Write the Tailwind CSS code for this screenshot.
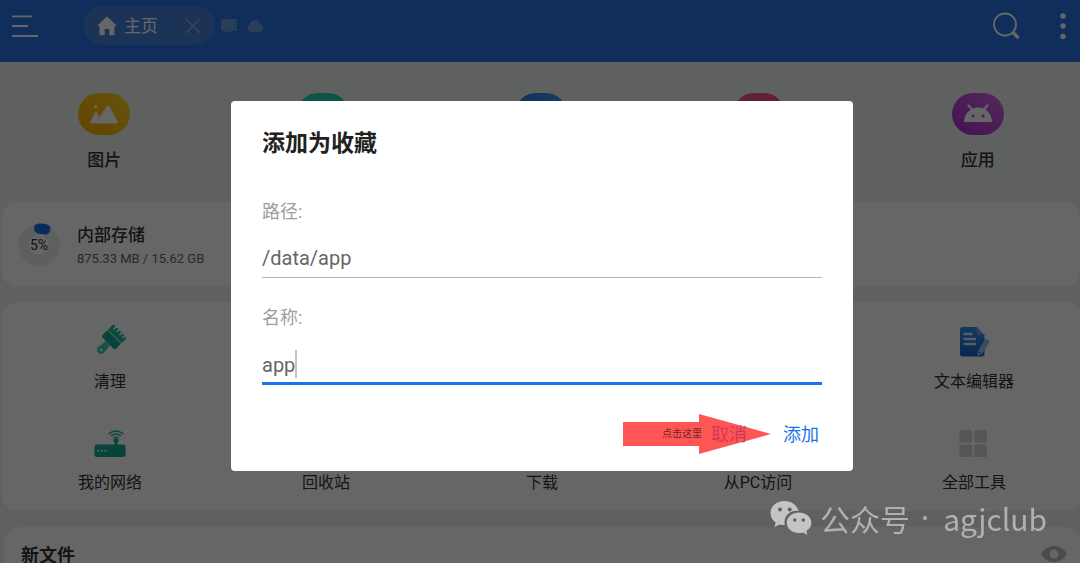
<!DOCTYPE html>
<html lang="zh-CN">
<head>
    <meta charset="UTF-8">
    <meta name="viewport" content="width=device-width, initial-scale=1.0">
    <title>添加为收藏</title>
    <script src="https://cdn.jsdelivr.net/npm/@tailwindcss/browser@4"></script>
</head>
<body class="flex h-screen flex-col overflow-hidden bg-[#ecf3f0] font-[Roboto,'Noto_Sans_CJK_SC',sans-serif] text-[#333]">

    <!-- Barra superior -->
    <header class="flex h-[62px] shrink-0 items-start bg-[#2673e6] pl-3 text-white">
        <button aria-label="菜单" class="mt-[14px]">
            <svg class="h-6 w-[26px]" viewBox="0 0 26 24" stroke="currentColor" stroke-width="1.800"><path d="M0 2.300h20M0 12h16M0 22h26"/></svg>
        </button>
        <div class="mt-[6px] ml-[45px] flex h-[39px] w-[132px] items-center rounded-full bg-[#4280d6] pr-[14px] pl-[14px]">
            <svg class="h-5 w-5" viewBox="0 0 20 20" fill="currentColor"><path d="M10 0.500 19 9a.8.800 0 0 1-.5 1.300H17.500V18.500a.7.700 0 0 1-.7.700H12.300V13H7.700v6.200H3.200a.7.700 0 0 1-.7-.7V10.300H1.500A.8.800 0 0 1 1 9z"/></svg>
            <a href="#" class="ml-[7px] text-[17px] leading-6">主页</a>
            <button aria-label="关闭" class="ml-auto">
                <svg class="h-4 w-4" viewBox="0 0 16 16" fill="none" stroke="#92b6e6" stroke-width="1.200"><path d="m1 1 14 14M15 1 1 15"/></svg>
            </button>
        </div>
        <svg class="mt-[19px] ml-[6px] h-[14px] w-4" viewBox="0 0 16 14" fill="#6a98de"><path d="M1.500 0h13A1.500 1.500 0 0 1 16 1.500v9a1.500 1.500 0 0 1-1.500 1.500H10l-1 1H7l-1-1-1 1H3l-1-1h-.5A1.500 1.500 0 0 1 0 10.500v-9A1.500 1.500 0 0 1 1.500 0z"/><path d="M14 2v1.500M14 5v1.500M14 8v1.500" stroke="#2673e6"/></svg>
        <svg class="mt-[19px] ml-[10px] h-[14px] w-4" viewBox="0 0 16 14" fill="#6a98de"><path d="M4 13a4 4 0 0 1-1.500-7.500C3 3 5 .8 8 .8s4.800 2 5.200 4.500A3.900 3.900 0 0 1 12 13z"/></svg>
        <button aria-label="搜索" class="mt-3 ml-auto">
            <svg class="h-7 w-7" viewBox="0 0 28 28" fill="none" stroke="currentColor"><circle cx="12" cy="12.500" r="11" stroke-width="1.800"/><path d="m19.500 20 6 6" stroke-width="3.400"/></svg>
        </button>
        <button aria-label="更多" class="mt-[13px] mr-[13px] ml-[38px]">
            <svg class="h-[27px] w-2" viewBox="0 0 8 27" fill="currentColor"><circle cx="4" cy="3" r="2.700"/><circle cx="4" cy="13" r="2.700"/><circle cx="4" cy="23.500" r="2.700"/></svg>
        </button>
    </header>

    <!-- Categorías -->
    <nav class="-mr-[7px] -ml-[5px] grid shrink-0 grid-cols-5 pt-[31px] pb-[30px] text-center text-[17px] leading-6 font-medium">
        <a href="#" class="flex flex-col items-center gap-[13px]">
            <span class="flex h-[42px] w-[52px] items-center justify-center rounded-full bg-linear-to-tr from-[#f5a800] to-[#ffd21f]">
                <svg class="h-5 w-7" viewBox="0 0 28 20" fill="#fff"><circle cx="5.500" cy="2.500" r="1.700"/><path d="M1.500 19.500a1.200 1.200 0 0 1-1-1.800L5 8.500q1-1.800 2 0l2.500 5L16.500 2.500q1.500-2.200 3 0l8 15a1.300 1.300 0 0 1-1 2z"/></svg>
            </span>
            图片
        </a>
        <a href="#" aria-label="音乐" class="flex flex-col items-center"><span class="h-[42px] w-[52px] rounded-full bg-[#1fd0b4]"></span></a>
        <a href="#" aria-label="视频" class="flex flex-col items-center"><span class="h-[42px] w-[52px] rounded-full bg-linear-to-r from-[#2478e8] to-[#3c9ef0]"></span></a>
        <a href="#" aria-label="文档" class="flex flex-col items-center"><span class="h-[42px] w-[52px] rounded-full bg-[#f0547c]"></span></a>
        <a href="#" class="flex flex-col items-center gap-[13px]">
            <span class="flex h-[42px] w-[52px] items-center justify-center rounded-full bg-linear-to-tr from-[#a826c8] to-[#d268e0]">
                <svg class="h-5 w-7" viewBox="0 0 28 20"><path d="M0 18A14 14.500 0 0 1 28 18z" fill="#fff"/><path d="m4.500 1.500 4.500 5M23.500 1.500 19 6.500" stroke="#fff" stroke-width="2.200" stroke-linecap="round"/><circle cx="9" cy="12" r="1.500" fill="#bb48d2"/><circle cx="19" cy="12" r="1.500" fill="#bb48d2"/></svg>
            </span>
            应用
        </a>
    </nav>

    <!-- Almacenamiento -->
    <section class="ml-[2px] flex h-[85px] shrink-0 items-center rounded-2xl bg-white pl-4">
        <div class="relative flex h-[42px] w-[42px] items-center justify-center rounded-full bg-[#e8efec] text-sm">
            <svg class="absolute top-0 left-0 h-[42px] w-[42px] overflow-visible" viewBox="0 0 42 42"><circle cx="21" cy="21" r="10" fill="#fff"/><path d="M21.500-.500q8-.5 10.500 3 1 4-1.500 7-2 1.500-6 .5-5 .5-7.500-2.500-2-3.500 0-6.500 1.500-1.500 4.500-1.500z" fill="#1a6be8"/></svg>
            <span class="relative">5%</span>
        </div>
        <div class="mt-1 ml-[17px]">
            <h2 class="text-[17px] leading-6 font-medium">内部存储</h2>
            <p class="text-[13px] leading-6 text-[#666]">875.33 MB / 15.62 GB</p>
        </div>
    </section>

    <!-- Herramientas -->
    <section class="mt-[15px] -mr-[2px] ml-[2px] grid shrink-0 grid-cols-5 gap-y-[34px] rounded-2xl bg-white pt-[23px] pb-[18px] text-base leading-5">
        <a href="#" class="flex flex-col items-center gap-[15px]">
            <svg class="h-8 w-8" viewBox="0 0 32 32"><g transform="rotate(45 16 16)"><path d="M6.500 3q0-1.500 1.500-1.500T9.500 3v1.500a.8.800 0 0 0 1.600 0V3q0-1.500 1.300-1.500T13.700 3v1.500a.8.800 0 0 0 1.600 0V3q0-1.500 1.300-1.500T17.900 3v1.500a.8.800 0 0 0 1.600 0V3q0-1.500 1.300-1.500T22.100 3v1.500a.8.800 0 0 0 1.600 0V3q0-1.500 1-1.500T25.700 3v6.500H6.500z" fill="#18b89f"/><path d="M6.500 10.300h19.200V17a2 2 0 0 1-2 2H8.500a2 2 0 0 1-2-2z" fill="#0fa891"/><path d="M13 19h6l1 9.500a4 4 0 0 1-8 0z" fill="#3fcbb6"/><circle cx="16" cy="28.500" r="1.300" fill="#fff"/></g></svg>
            清理
        </a>
        <a href="#" aria-label="分析"></a>
        <a href="#" aria-label="加密"></a>
        <a href="#" aria-label="云盘"></a>
        <a href="#" class="flex flex-col items-center gap-[15px]">
            <svg class="h-8 w-8" viewBox="0 0 32 32">
                <defs><linearGradient id="doc" x1="0" y1="0" x2="0" y2="1"><stop stop-color="#2d93e6"/><stop offset="1" stop-color="#1b5fd2"/></linearGradient></defs>
                <path d="M5 2h13.500l8 8V29a2.500 2.500 0 0 1-2.500 2.500h-19.500A2.500 2.500 0 0 1 2 29V4.500A2.500 2.500 0 0 1 4.500 2z" fill="url(#doc)"/><path d="M18.500 2v6a2 2 0 0 0 2 2h6z" fill="#5da4ea"/><path d="M6.500 9h7M6.500 14h10.500M6.500 19h10.500" stroke="#d4e7ff" stroke-width="2.400" stroke-linecap="round"/><path d="m27.500 13.500 4.500 2.500L24 29l-4.500 2.200.2-5z" fill="#98bff0"/><path d="m19.700 26.200 4.300 2.800" stroke="#2a70d8"/>
            </svg>
            文本编辑器
        </a>
        <a href="#" class="flex flex-col items-center gap-[15px]">
            <svg class="h-8 w-8" viewBox="0 0 32 32"><rect x="0.500" y="18.500" width="31" height="12.500" rx="2.500" fill="#10a890"/><circle cx="4" cy="24.700" r="1.200" fill="#bdeee6"/><circle cx="7.700" cy="24.700" r="1.200" fill="#bdeee6"/><circle cx="11.500" cy="24.700" r="1.200" fill="#bdeee6"/><circle cx="22" cy="14.500" r="2.500" fill="#10a890"/><path d="M22 14v5" stroke="#10a890" stroke-width="2.500"/><path d="M14.500 8q7.500-6 15 0M16.800 10q5.200-4 10.400 0M19 11.800q3-2 6 0" fill="none" stroke="#20b59e" stroke-width="1.300"/></svg>
            我的网络
        </a>
        <a href="#" class="flex flex-col items-center justify-end">回收站</a>
        <a href="#" class="flex flex-col items-center justify-end">下载</a>
        <a href="#" class="flex flex-col items-center justify-end">从PC访问</a>
        <a href="#" class="flex flex-col items-center gap-[15px]">
            <svg class="h-8 w-8" viewBox="0 0 32 32" fill="#d0d7d4"><rect x="1.500" y="4" width="12.500" height="12.500" rx="1.500"/><rect x="16.500" y="4" width="12.500" height="12.500" rx="1.500"/><rect x="1.500" y="18.500" width="12.500" height="12.500" rx="1.500"/><rect x="16.500" y="18.500" width="12.500" height="12.500" rx="1.500"/></svg>
            全部工具
        </a>
    </section>

    <!-- Archivos nuevos -->
    <section class="mt-4 ml-1 flex min-h-0 flex-1 items-start overflow-hidden rounded-t-2xl bg-white pt-[17px] pr-[13px] pl-[17px]">
        <h2 class="text-lg leading-6 font-bold">新文件</h2>
        <button aria-label="显示" class="mt-px ml-auto">
            <svg class="h-[18px] w-[26px]" viewBox="0 0 26 18"><path d="M0 9Q5 1 13 1t13 8q-5 8-13 8T0 9z" fill="#bbb"/><circle cx="13" cy="9" r="4.500" fill="#fff"/></svg>
        </button>
    </section>

    <!-- Diálogo -->
    <div class="fixed inset-0 flex items-center justify-center bg-black/60 pt-[9px] pl-1">
        <form role="dialog" aria-labelledby="titulo" class="relative flex w-[622px] flex-col rounded bg-white px-[31px] pt-[27px] pb-[18px]">
            <h1 id="titulo" class="text-[23px] leading-8 font-bold text-[#212121]">添加为收藏</h1>

            <label for="ruta" class="mt-10 text-lg leading-6 text-[#9e9e9e]">路径:</label>
            <input type="text" id="ruta" value="/data/app" class="mt-[14px] h-10 border-b border-[#b5b5b5] text-xl text-[#666] outline-none">

            <label for="nombre" class="mt-7 text-lg leading-6 text-[#9e9e9e]">名称:</label>
            <div class="relative mt-[15px] flex">
                <input type="text" id="nombre" value="app" class="h-10 w-full border-b-3 border-[#1a73e8] pt-[2px] text-xl text-[#666] outline-none">
                <span class="absolute top-[5px] left-[33px] h-7 w-[2px] bg-[#c4c4c4]"></span>
            </div>

            <div class="mt-8 flex h-9 items-center justify-end gap-9 pr-[3px] text-lg text-[#1a73e8]">
                <button type="button" id="cancelar">取消</button>
                <button type="submit" id="agregar">添加</button>
            </div>

            <div class="pointer-events-none absolute right-[82px] bottom-[17px] h-10 w-[148px]">
                <svg class="h-10 w-[148px]" viewBox="0 0 148 40"><path d="M0 8h76V0l72 20-72 20v-8H0z" fill="#ff2b2b" fill-opacity=".8"/></svg>
                <span class="absolute top-3 left-[39px] text-[10px] leading-4 text-black/60">点击这里</span>
            </div>
        </form>
    </div>

    <!-- Marca de agua -->
    <div class="pointer-events-none fixed right-[33px] bottom-[27px] flex items-center font-['Noto_Sans_CJK_SC',sans-serif] text-3xl text-[#b0b0b0]">
        <svg class="mr-2 h-9 w-[42px]" viewBox="0 0 42 36" fill="#c4c4c4">
            <path d="M14.500 1C6.500 1 .5 6.500.5 13c0 4 2 7.300 5.200 9.500L4.500 27l5.300-2.600c1.800.5 3.300.7 5 .6A11.500 11.500 0 0 1 28.500 11C27 5 21.200 1 14.500 1z"/>
            <path d="M29 12.500c-7 0-12.300 4.600-12.300 10.300S22 33.100 29 33.100c1.500 0 2.900-.2 4.200-.6l4.300 2.500-1.100-4c3-2 5-5 5-8.300 0-5.600-5.400-10.200-12.400-10.200z"/>
            <g fill="#606060"><circle cx="10" cy="9.500" r="2"/><circle cx="19.700" cy="9.500" r="2"/><circle cx="24.800" cy="20" r="1.700"/><circle cx="33.300" cy="20" r="1.700"/></g>
        </svg>
        <span>公众号</span>
        <span class="mr-[14px] ml-[11px] font-['Noto_Sans',sans-serif]">·</span>
        <span>agjclub</span>
    </div>

    <script>
        document.getElementById("cancelar").addEventListener("click", () => {
            document.getElementById("nombre").value = "";
        });
    </script>
</body>
</html>
